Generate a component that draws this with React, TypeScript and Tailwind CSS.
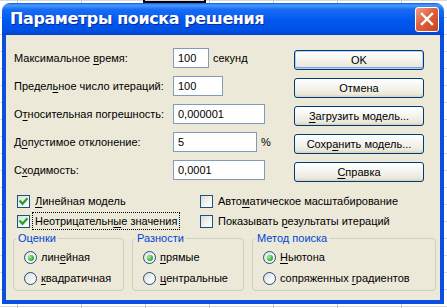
import React from "react";

function U({ children }: { children: React.ReactNode }) {
  return <span className="underline underline-offset-[2px] decoration-[1px]">{children}</span>;
}

function Field({
  label,
  value,
  width,
  suffix,
}: {
  label: React.ReactNode;
  value: string;
  width: string;
  suffix?: string;
}) {
  return (
    <div className="flex h-[28px] items-center">
      <div className="w-[159px] shrink-0">{label}</div>
      <div className={`flex h-[20px] items-center border border-[#7f9db9] bg-white pl-[4px] ${width}`}>{value}</div>
      {suffix && <span className="ml-[4px]">{suffix}</span>}
    </div>
  );
}

function XpButton({ children, primary }: { children: React.ReactNode; primary?: boolean }) {
  return (
    <div
      className={`flex h-[20px] w-[130px] items-center justify-center rounded-[3px] border border-[#003c74] bg-[linear-gradient(to_bottom,#ffffff_0%,#f4f3ee_50%,#ece9d8_85%,#d6d0c5_100%)] ${
        primary ? "shadow-[inset_0_0_0_1px_#b6cdf2,inset_0_-1px_0_1px_#7ba2e7]" : ""
      }`}
    >
      {children}
    </div>
  );
}

function CheckBox({ checked }: { checked?: boolean }) {
  return (
    <div className="flex h-[13px] w-[13px] shrink-0 items-center justify-center border border-[#1c5180] bg-[linear-gradient(135deg,#dcdcd7_0%,#f5f5f2_60%,#ffffff_100%)]">
      {checked && (
        <svg width="9" height="9" viewBox="0 0 9 9">
          <path d="M0.5 3.5 L3.5 6.8 L8.5 1.2" fill="none" stroke="#21a121" strokeWidth="2.2" />
        </svg>
      )}
    </div>
  );
}

function Radio({ checked, children }: { checked?: boolean; children: React.ReactNode }) {
  return (
    <div className="flex h-[21px] items-center">
      <div className="flex h-[13px] w-[13px] shrink-0 items-center justify-center rounded-full border border-[#1c5180] bg-[linear-gradient(135deg,#dcdcd7_0%,#f5f5f2_60%,#ffffff_100%)]">
        {checked && <div className="h-[6px] w-[6px] rounded-full bg-[radial-gradient(circle_at_35%_35%,#9ef09e_0%,#21a121_75%)]" />}
      </div>
      <span className="ml-[4px]">{children}</span>
    </div>
  );
}

function Group({ title, className, children }: { title: string; className: string; children: React.ReactNode }) {
  return (
    <fieldset className={`h-[60px] rounded-[4px] border border-[#d0d0bf] ${className}`}>
      <legend className="ml-[2px] px-[2px] leading-[14px] text-[#0046d5]">{title}</legend>
      <div className="mt-[2px] pl-[10px]">{children}</div>
    </fieldset>
  );
}

export default function App() {
  return (
    <div className="relative h-[308px] w-[447px] overflow-hidden bg-white bg-[linear-gradient(to_right,#c8c8c8_1px,transparent_1px),linear-gradient(to_bottom,#dadada_1px,transparent_1px)] bg-[size:64px_17px] bg-[position:17px_0px] font-['Liberation_Sans',Arial,sans-serif] text-[11px] text-black">
      {/* selected cell frame peeking above the dialog */}
      <div className="absolute left-[143px] top-[-4px] h-[7px] w-[63px] border-2 border-black" />

      <div className="absolute left-[2px] top-[3px] flex h-[301px] w-[442px] flex-col">
        {/* title bar */}
        <div className="flex h-[32px] shrink-0 items-center justify-between rounded-t-[8px] bg-[linear-gradient(to_bottom,#0a5fe8_0%,#4a9bfb_7%,#1a6cf5_20%,#0058ee_55%,#0050e4_85%,#0043cf_100%)] pl-[8px] pr-[5px]">
          <span className="font-['DejaVu_Sans',sans-serif] text-[16px] font-bold tracking-[-0.4px] text-white [text-shadow:1px_1px_0_#0a2a9a]">
            Параметры поиска решения
          </span>
          <div className="flex h-[25px] w-[24px] items-center justify-center rounded-[3px] border border-white bg-[linear-gradient(135deg,#f0a086_0%,#e0603c_45%,#c8431f_100%)]">
            <svg width="14" height="14" viewBox="0 0 14 14">
              <path d="M2 2 L12 12 M12 2 L2 12" stroke="white" strokeWidth="2.4" strokeLinecap="square" />
            </svg>
          </div>
        </div>

        {/* client area */}
        <div className="flex-1 border-x-4 border-b-4 border-[#0a4fe0] bg-[#ece9d8] pl-[7px] pt-[9px]">
          <div className="flex">
            <div className="w-[281px] pl-[1px]">
              <Field label={<>Максимальное <U>в</U>ремя:</>} value="100" width="w-[36px]" suffix="  секунд" />
              <Field label={<>Предел<U>ь</U>ное число итераций:</>} value="100" width="w-[50px]" />
              <Field label={<>О<U>т</U>носительная погрешность:</>} value="0,000001" width="w-[92px]" />
              <Field label={<>Д<U>о</U>пустимое отклонение:</>} value="5" width="w-[84px]" suffix="%" />
              <Field label={<>С<U>х</U>одимость:</>} value="0,0001" width="w-[92px]" />
            </div>
            <div className="mt-[6px] flex flex-col gap-[8px]">
              <XpButton primary>OK</XpButton>
              <XpButton>Отмена</XpButton>
              <XpButton>
                <span>
                  <U>З</U>агрузить модель...
                </span>
              </XpButton>
              <XpButton>
                <span>
                  Сохр<U>а</U>нить модель...
                </span>
              </XpButton>
              <XpButton>
                <span>
                  <U>С</U>правка
                </span>
              </XpButton>
            </div>
          </div>

          {/* check boxes */}
          <div className="mt-[7px] grid grid-cols-[183px_auto] pl-[4px]">
            <div className="flex h-[20px] items-center">
              <CheckBox checked />
              <span className="ml-[3px] px-[2px]">
                <U>Л</U>инейная модель
              </span>
            </div>
            <div className="flex h-[20px] items-center">
              <CheckBox />
              <span className="ml-[3px] px-[2px]">
                Авто<U>м</U>атическое масштабирование
              </span>
            </div>
            <div className="flex h-[20px] items-center">
              <CheckBox checked />
              <span className="ml-[3px] px-[2px] outline outline-1 outline-dotted outline-black">
                Неотрицательн<U>ы</U>е значения
              </span>
            </div>
            <div className="flex h-[20px] items-center">
              <CheckBox />
              <span className="ml-[3px] px-[2px]">
                Показывать <U>р</U>езультаты итераций
              </span>
            </div>
          </div>

          {/* group boxes */}
          <div className="flex">
            <Group title="Оценки" className="w-[111px]">
              <Radio checked>
                лин<U>е</U>йная
              </Radio>
              <Radio>
                <U>к</U>вадратичная
              </Radio>
            </Group>
            <Group title="Разности" className="ml-[8px] w-[112px]">
              <Radio checked>
                <U>п</U>рямые
              </Radio>
              <Radio>
                <U>ц</U>ентральные
              </Radio>
            </Group>
            <Group title="Метод поиска" className="ml-[8px] w-[184px]">
              <Radio checked>
                <U>Н</U>ьютона
              </Radio>
              <Radio>
                сопряженных <U>г</U>радиентов
              </Radio>
            </Group>
          </div>
        </div>
      </div>
    </div>
  );
}
